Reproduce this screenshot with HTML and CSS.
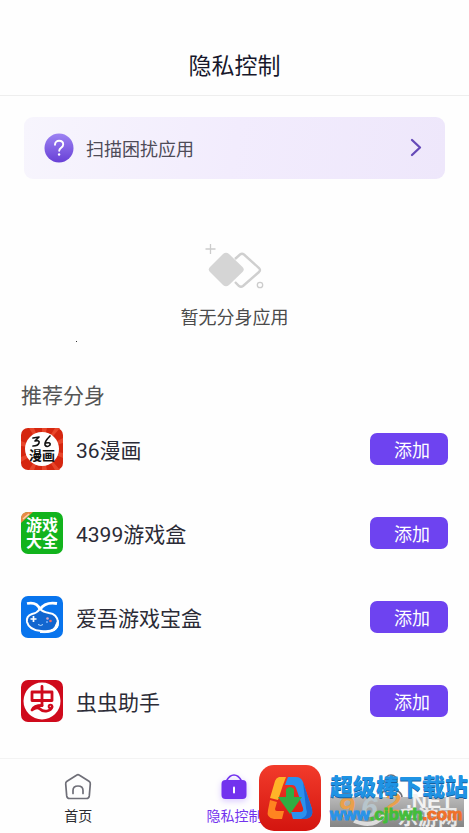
FILE: index.html
```html
<!DOCTYPE html>
<html lang="zh-CN">
<head>
  <meta charset="UTF-8">
  <meta name="viewport" content="width=device-width, initial-scale=1.0">
  <title>隐私控制</title>
  <link rel="stylesheet" href="styles.css">
</head>
<body>
  <div class="app">
    <header class="header">
      <h1>隐私控制</h1>
    </header>

    <main class="content">
      <button class="scan-banner" type="button">
        <svg class="scan-icon" viewBox="0 0 30 30">
          <defs>
            <linearGradient id="scan-fill" x1="0" y1="0" x2="0" y2="1">
              <stop offset="0" stop-color="#9d83f3"/>
              <stop offset="1" stop-color="#6840d6"/>
            </linearGradient>
          </defs>
          <circle cx="15" cy="15" r="14.5" fill="url(#scan-fill)"/>
          <path d="M11 11.8c0-2.5 1.7-4 4.1-4s4.100 1.500 4.100 3.700c0 3.200-4 3.400-4 6.300" fill="none" stroke="#fff" stroke-width="1.900" stroke-linecap="round"/>
          <circle cx="15.100" cy="21.500" r="1.200" fill="#fff"/>
        </svg>
        <span class="scan-label">扫描困扰应用</span>
        <svg class="scan-arrow" viewBox="0 0 12 20">
          <path d="M2 2l8 7.500-8 7.500" fill="none" stroke="#6549b8" stroke-width="2.300" stroke-linecap="round" stroke-linejoin="round"/>
        </svg>
      </button>

      <section class="empty">
        <svg class="empty-icon" viewBox="0 0 60 48">
          <path d="M5.500 0v10M.5 5h10" stroke="#ccc" stroke-width="1.300"/>
          <path d="M30 15l5-4.500q2-1.500 4 0L54 24q2 2 0 4L38 42q-2 1.500-4 0l-4-4" fill="none" stroke="#cfcfcf" stroke-width="2.400"/>
          <path d="M18 10q3-2.500 6 0l13.500 13q2.500 2.500 0 5L24 41q-3 2.500-6 0L5 28q-2.500-2.500 0-5z" fill="#d5d5d5"/>
          <circle cx="55" cy="41" r="2.700" fill="none" stroke="#ccc" stroke-width="1.300"/>
        </svg>
        <p>暂无分身应用</p>
      </section>

      <section class="recommend">
        <h2>推荐分身</h2>
        <ul class="app-list">
          <li class="app-row">
            <svg class="app-icon" viewBox="0 0 42 42">
              <rect width="42" height="42" rx="7" fill="#d5260f"/>
              <path d="M21 21L8 0h5zM21 21L21 0h5zM21 21L34 0h5zM21 21L42 10v5zM21 21L42 25v5zM21 21L39 42h-5zM21 21L26 42h-5zM21 21L13 42H8zM21 21L0 34v-5zM21 21L0 18v-5z" fill="#e8452a"/>
              <circle cx="21" cy="21" r="17" fill="#fff"/>
              <path d="M12 10l6-1-4 4q5-1 4 2-1 3-6 3M29 8q-6 6-5 9 2 3 5 0 1-3-4-2" fill="none" stroke="#111" stroke-width="1.700" stroke-linecap="round" stroke-linejoin="round"/>
              <text class="icon-text comic" x="21" y="32">漫画</text>
            </svg>
            <span class="app-name">36漫画</span>
            <button class="add-button" type="button">添加</button>
          </li>
          <li class="app-row">
            <svg class="app-icon" viewBox="0 0 42 42">
              <rect width="42" height="42" rx="7" fill="#12b31d"/>
              <path d="M0 9V7q0-7 7-7h5L0 11z" fill="#e98a45"/>
              <path d="M2 7l6-5" stroke="#f9d2ad" stroke-width="1.500"/>
              <text class="icon-text games" x="21" y="19">游戏</text>
              <text class="icon-text games" x="21" y="35">大全</text>
            </svg>
            <span class="app-name">4399游戏盒</span>
            <button class="add-button" type="button">添加</button>
          </li>
          <li class="app-row">
            <svg class="app-icon" viewBox="0 0 42 42">
              <rect width="42" height="42" rx="7" fill="#0874ed"/>
              <path d="M6 7.500q10-2 13 6 5-8 17-6" fill="none" stroke="#fff" stroke-width="2.800"/>
              <path d="M19 13q-3 4-8 5-6 2-5 8 2 8 14 9 17 2 17-9-1-8-9-9-6-1-9-4z" fill="#1266cf" stroke="#fff" stroke-width="2"/>
              <path d="M37 24q3 14-18 12.500 13-1 15-6z" fill="#fff" stroke="#fff"/>
              <path d="M12.500 20v6M9.500 23h6" stroke="#fff" stroke-width="1.700"/>
              <path d="M17 28.500q3 2 5 0" fill="none" stroke="#b9dcff" stroke-width="1"/>
              <circle cx="26.500" cy="22.500" r="1.300" fill="#d8a9c5"/>
              <circle cx="29.500" cy="25" r="1.300" fill="#ed6c70"/>
              <circle cx="26" cy="26" r="1" fill="#77b5ff"/>
            </svg>
            <span class="app-name">爱吾游戏宝盒</span>
            <button class="add-button" type="button">添加</button>
          </li>
          <li class="app-row">
            <svg class="app-icon" viewBox="0 0 42 42">
              <rect width="42" height="42" rx="7" fill="#cf0a1c"/>
              <circle cx="21" cy="21" r="18.500" fill="#fff"/>
              <g fill="none" stroke="#cf0a1c" stroke-width="2.800" stroke-linecap="round" stroke-linejoin="round">
                <path d="M11 12h20v8.500H11zM21 6.500v19"/>
                <path d="M21 25.500q-8 0-10 4.500 5-4 8-1c4 4 11 2 12-2"/>
                <circle cx="29.500" cy="26.500" r="1.800" stroke-width="2"/>
              </g>
            </svg>
            <span class="app-name">虫虫助手</span>
            <button class="add-button" type="button">添加</button>
          </li>
        </ul>
      </section>
    </main>

    <nav class="tab-bar">
      <a class="tab" href="#home">
        <svg class="tab-icon" viewBox="0 0 28 28">
          <path d="M12.500 2.200q1.500-1 3 0l9.500 6q1.500 1 1.300 2.700l-1 12q-.3 2.600-3 2.600H5.700q-2.700 0-3-2.600l-1-12Q1.500 9.200 3 8.200z" fill="none" stroke="#6f6f78" stroke-width="1.700"/>
          <path d="M9 20.500v-3q0-4.500 5-4.500t5 4.500v3" fill="none" stroke="#6f6f78" stroke-width="1.700" stroke-linecap="round"/>
        </svg>
        <span>首页</span>
      </a>
      <a class="tab active" href="#privacy">
        <svg class="tab-icon" viewBox="0 0 28 28">
          <path d="M6.500 8q3-6 7.500-6t7.500 6" fill="none" stroke="#7232ee" stroke-width="1.700"/>
          <rect x="1.500" y="7" width="25" height="19" rx="4" fill="#7232ee"/>
          <path d="M14 14.500v5" stroke="#fff" stroke-width="2" stroke-linecap="round"/>
        </svg>
        <span>隐私控制</span>
      </a>
      <a class="tab" href="#mine" aria-label="我的">
        <svg class="tab-icon" viewBox="0 0 28 28">
          <circle cx="14" cy="8" r="6" fill="none" stroke="#6f6f78" stroke-width="1.700"/>
          <path d="M3 25q0-8 11-8t11 8z" fill="none" stroke="#6f6f78" stroke-width="1.700"/>
        </svg>
      </a>
    </nav>

    <i class="speck"></i>

    <!-- download site stamp over the bottom right corner -->
    <div class="stamp">
      <svg class="stamp-logo" viewBox="0 0 62 66">
        <defs>
          <linearGradient id="logo-fill" x1="0" y1="0" x2="0" y2="1">
            <stop offset="0" stop-color="#f23b2b"/>
            <stop offset="1" stop-color="#d3150f"/>
          </linearGradient>
        </defs>
        <rect width="62" height="66" rx="15" fill="url(#logo-fill)"/>
        <path d="M20 12h7l-3 8-5 15-8-2 5-17q1-3 4-4z" fill="#ffb428"/>
        <path d="M11 35l7 2-2 7q0 2 2 2h7l-2 8h-8q-8-1-6-9z" fill="#ff8420"/>
        <path d="M29 12h8q5 0 7 5l9 27q2 9-7 10H34l-2-7h9q4 0 3-4l-7-20q-1-3-4-3h-7z" fill="#2a91ee"/>
        <path d="M44 17l9 27q2 9-7 10h-4q8-3 5-11z" fill="#1c68d0"/>
        <path d="M27 24q4-4 8 0v8h8L31 49 19 32h8z" fill="#31ac42"/>
      </svg>
      <div class="stamp-words">
        <svg class="stamp-back" viewBox="0 0 134 52">
          <defs>
            <linearGradient id="plate-fill" x1="0" y1="0" x2="0" y2="1">
              <stop offset="0" stop-color="#b9b9b9"/>
              <stop offset="1" stop-color="#858585"/>
            </linearGradient>
          </defs>
          <rect y="22" width="134" height="30" fill="url(#plate-fill)"/>
          <path d="M24 46q20 8 30-6" fill="none" stroke="#ddd" stroke-width="4"/>
          <text class="back-number" x="8" y="42">9</text>
          <text class="back-number pale" x="31" y="42">6</text>
          <text class="back-number" x="54" y="38">2</text>
          <text class="back-net" x="76" y="33">.NET</text>
          <text class="back-site" x="68" y="50">乐游网</text>
        </svg>
        <strong class="stamp-title">超级棒下载站</strong>
        <span class="stamp-url">www<b class="green">.cjbwh</b><b class="orange">.com</b></span>
      </div>
    </div>
  </div>
</body>
</html>
```

FILE: styles.css
```css
* {
  margin: 0;
  padding: 0;
  box-sizing: border-box;
}

body {
  font-family: 'Noto Sans CJK SC', Roboto, sans-serif;
  background-color: #fefefe;
  color: #22222e;
}

button {
  font-family: inherit;
  border: none;
  cursor: pointer;
}

.app {
  position: relative;
  display: flex;
  flex-direction: column;
  min-height: 100vh;
  overflow: hidden;
}

.header {
  padding: 48px 0 15px;
  border-bottom: 1px solid #eeeeee;
  text-align: center;
}

.header h1 {
  font-size: 23px;
  font-weight: 400;
  line-height: 32px;
  color: #17172b;
}

.content {
  flex: 1;
}

/* Scan banner */
.scan-banner {
  display: flex;
  align-items: center;
  gap: 12px;
  width: calc(100% - 48px);
  height: 62px;
  margin: 21px 24px 0;
  padding: 0 23px 0 20px;
  border-radius: 9px;
  background: linear-gradient(100deg, #f7f5fd, #f2ecfd 50%, #eee7fb);
}

.scan-icon {
  width: 30px;
  height: 30px;
}

.scan-label {
  flex: 1;
  text-align: left;
  font-size: 18px;
  line-height: 24px;
  color: #4e4b58;
}

.scan-arrow {
  width: 12px;
  height: 20px;
}

/* Empty state */
.empty {
  display: flex;
  flex-direction: column;
  align-items: center;
  gap: 12px;
  padding-top: 65px;
}

.empty-icon {
  width: 60px;
  height: 48px;
}

.empty p {
  font-size: 18px;
  line-height: 24px;
  color: #4b4b4b;
}

/* Recommended apps */
.recommend {
  padding: 54px 21px 0;
}

.recommend h2 {
  font-size: 21px;
  font-weight: 400;
  line-height: 24px;
  color: #555555;
}

.app-list {
  display: flex;
  flex-direction: column;
  gap: 42px;
  padding-top: 22px;
  list-style: none;
}

.app-row {
  display: flex;
  align-items: center;
  gap: 13px;
}

.app-icon {
  width: 42px;
  height: 42px;
}

.icon-text {
  font-family: 'Noto Sans CJK SC', sans-serif;
  font-weight: 700;
  text-anchor: middle;
}

.icon-text.comic {
  font-size: 13px;
  fill: #111111;
}

.icon-text.games {
  font-size: 16px;
  fill: #ffffff;
}

.app-name {
  flex: 1;
  padding-top: 3px;
  font-family: Roboto, 'Noto Sans CJK SC', sans-serif;
  font-size: 21px;
  line-height: 28px;
  color: #2b2b36;
}

.add-button {
  width: 78px;
  height: 32px;
  padding-left: 6px;
  border-radius: 7px;
  background: #6e43f0;
  color: #ffffff;
  font-size: 18px;
  line-height: 24px;
}

/* Bottom tabs */
.tab-bar {
  display: flex;
  height: 75px;
  border-top: 1px solid #f3f3f3;
}

.tab {
  flex: 1;
  display: flex;
  flex-direction: column;
  align-items: center;
  gap: 4px;
  padding-top: 14px;
  color: #2b2b30;
  font-size: 14px;
  line-height: 20px;
  text-decoration: none;
}

.tab.active {
  color: #7232ee;
}

.tab-icon {
  width: 28px;
  height: 28px;
}

.tab.active .tab-icon {
  filter: drop-shadow(0 2px 3px #d9c8ff);
}

.speck {
  position: absolute;
  top: 341px;
  left: 76px;
  width: 1px;
  height: 1px;
  background: #333333;
}

/* Download site stamp */
.stamp {
  position: absolute;
  right: 1px;
  bottom: 2px;
  display: flex;
  align-items: flex-end;
  gap: 9px;
}

.stamp-logo {
  width: 62px;
  height: 66px;
}

.stamp-words {
  position: relative;
  display: flex;
  flex-direction: column;
  width: 138px;
  height: 60px;
}

.stamp-back {
  position: absolute;
  left: 0;
  bottom: 4px;
  width: 134px;
  height: 52px;
}

.back-number {
  font: italic 700 30px 'Liberation Sans', sans-serif;
  fill: #e9a04b;
}

.back-number.pale {
  fill: #b7c5cc;
}

.back-net {
  font: 700 21px 'Liberation Sans', sans-serif;
  fill: #f2f2f2;
}

.back-site {
  font: 700 20px 'Noto Sans CJK SC', sans-serif;
  fill: #e8e8e8;
}

.stamp-title {
  position: relative;
  font-family: 'Noto Sans CJK SC', sans-serif;
  font-size: 23px;
  font-weight: 900;
  line-height: 28px;
  color: #1f93e4;
  white-space: nowrap;
  text-shadow: 0 1px 0 #17609e;
}

.stamp-url {
  position: relative;
  padding-top: 4px;
  font-family: 'Liberation Sans', sans-serif;
  font-size: 17px;
  font-weight: 700;
  line-height: 24px;
  color: #2a93e8;
  white-space: nowrap;
  -webkit-text-stroke: 1px currentColor;
}

.stamp-url .green {
  color: #43bd3a;
}

.stamp-url .orange {
  color: #f0712a;
}
```
